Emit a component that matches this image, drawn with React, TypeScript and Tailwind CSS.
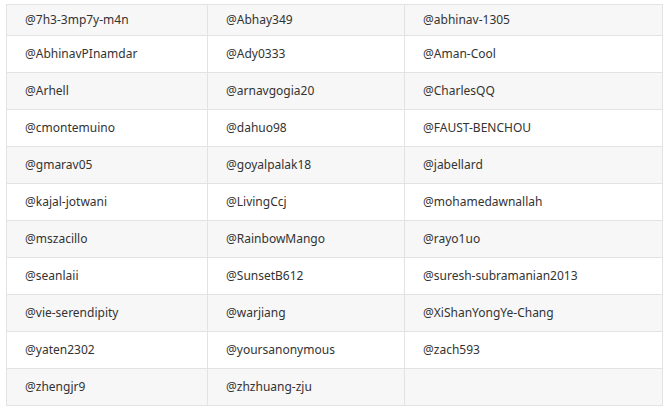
import React from "react";

const names = [
  ["@7h3-3mp7y-m4n", "@Abhay349", "@abhinav-1305"],
  ["@AbhinavPInamdar", "@Ady0333", "@Aman-Cool"],
  ["@Arhell", "@arnavgogia20", "@CharlesQQ"],
  ["@cmontemuino", "@dahuo98", "@FAUST-BENCHOU"],
  ["@gmarav05", "@goyalpalak18", "@jabellard"],
  ["@kajal-jotwani", "@LivingCcj", "@mohamedawnallah"],
  ["@mszacillo", "@RainbowMango", "@rayo1uo"],
  ["@seanlaii", "@SunsetB612", "@suresh-subramanian2013"],
  ["@vie-serendipity", "@warjiang", "@XiShanYongYe-Chang"],
  ["@yaten2302", "@yoursanonymous", "@zach593"],
  ["@zhengjr9", "@zhzhuang-zju", ""],
];

const App = () => {
  return (
    <div className="w-[667px] h-[412px] bg-white pt-1 pl-[6px]">
      <table
        className="border-collapse text-[12px] text-[#333]"
        style={{ fontFamily: '"Noto Sans", "Open Sans", sans-serif' }}
      >
        <colgroup>
          <col className="w-[201px]" />
          <col className="w-[197px]" />
          <col className="w-[258px]" />
        </colgroup>
        <tbody>
          {names.map((row, i) => (
            <tr
              key={i}
              className={`${i % 2 === 0 ? "bg-[#f7f7f7]" : "bg-white"} ${i === 0 ? "h-[31px]" : "h-[37px]"}`}
            >
              {row.map((name, j) => (
                <td
                  key={j}
                  className="border border-[#e3e3e3] pl-[18px] pr-3 py-0 align-middle whitespace-nowrap"
                >
                  {name}
                </td>
              ))}
            </tr>
          ))}
        </tbody>
      </table>
    </div>
  );
};

export default App;
